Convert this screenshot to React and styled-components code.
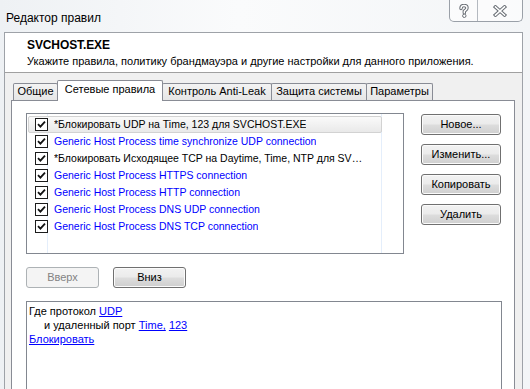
import React from "react";
import styled, { createGlobalStyle } from "styled-components";

const GlobalStyle = createGlobalStyle`
  html, body { margin: 0; padding: 0; background: #ffffff; }
  body { font-family: "Liberation Sans", Arial, sans-serif; }
  * { box-sizing: border-box; }
`;

const UI_FONT = `"Liberation Sans", Arial, sans-serif`;

const Window = styled.div`
  width: 530px;
  height: 389px;
  overflow: hidden;
  display: flex;
  flex-direction: column;
  background: linear-gradient(90deg, #eef1f4 0%, #fafbfc 45%, #f3f5f7 100%);
  font-family: ${UI_FONT};
  color: #000;
`;

const TitleBar = styled.div`
  height: 32px;
  flex: none;
  display: flex;
  align-items: flex-start;
  padding-left: 6px;
  padding-right: 7px;
`;

const Title = styled.div`
  font-size: 12px;
  line-height: 14px;
  margin-top: 11px;
  color: #000;
  flex: 1;
`;

const Caption = styled.div`
  display: flex;
  height: 22px;
  border: 1px solid #9aa0a8;
  border-top: none;
  border-radius: 0 0 5px 5px;
  background: rgba(255, 255, 255, 0.6);
  overflow: hidden;
`;

const CapBtn = styled.div`
  width: ${(p) => p.$w}px;
  height: 100%;
  display: flex;
  align-items: center;
  justify-content: center;
  border-left: ${(p) => (p.$first ? "none" : "1px solid #b4b9c0")};
`;

const Body = styled.div`
  flex: 1;
  display: flex;
  flex-direction: column;
  margin-left: 4px;
  margin-right: 7px;
  border: 1px solid #9ea2a8;
  border-bottom: none;
  background: #f0f0f0;
  min-height: 0;
`;

const Header = styled.div`
  height: 40px;
  flex: none;
  background: #ffffff;
  border-bottom: 1px solid #a0a0a0;
  padding: 5px 0 0 22px;
`;

const AppName = styled.div`
  font-size: 12px;
  font-weight: bold;
  line-height: 14px;
  letter-spacing: -0.1px;
`;

const AppHint = styled.div`
  font-size: 11px;
  line-height: 14px;
  margin-top: 2px;
`;

const Content = styled.div`
  flex: 1;
  display: flex;
  flex-direction: column;
  padding: 7px 7px 0 6px;
  min-height: 0;
`;

const Tabs = styled.div`
  display: flex;
  align-items: flex-end;
  height: 20px;
  padding-left: 2px;
  position: relative;
  z-index: 1;
`;

const Tab = styled.div`
  height: ${(p) => (p.$active ? 21 : 17)}px;
  margin-bottom: ${(p) => (p.$active ? -1 : 0)}px;
  width: ${(p) => p.$w}px;
  margin-left: -1px;
  border: 1px solid #898c95;
  border-bottom: none;
  border-radius: 2px 2px 0 0;
  background: ${(p) =>
    p.$active ? "#ffffff" : "linear-gradient(#f3f3f3, #e6e6e6)"};
  font-size: 11px;
  line-height: ${(p) => (p.$active ? 17 : 15)}px;
  text-align: center;
  white-space: nowrap;
  position: relative;
  z-index: ${(p) => (p.$active ? 2 : 1)};
  &:first-child { margin-left: 0; }
`;

const Pane = styled.div`
  flex: 1;
  background: #ffffff;
  border: 1px solid #898c95;
  border-bottom: none;
  padding: 12px 0 0 14px;
  display: flex;
  flex-direction: column;
  min-height: 0;
`;

const TopRow = styled.div`
  display: flex;
  gap: 17px;
`;

const RuleList = styled.div`
  width: 378px;
  height: 141px;
  border: 1px solid #828790;
  padding: 2px 1px;
  background:
    linear-gradient(#e4eefb, #e4eefb) 20px 0 / 1px 100% no-repeat,
    linear-gradient(#e4eefb, #e4eefb) 354px 0 / 1px 100% no-repeat,
    #ffffff;
`;

const RuleRow = styled.div`
  width: 354px;
  height: 17px;
  display: flex;
  align-items: center;
  padding-left: 6px;
  padding-right: 13px;
  border: 1px solid ${(p) => (p.$selected ? "#d2d2d2" : "transparent")};
  border-radius: 2px;
  background: ${(p) =>
    p.$selected ? "linear-gradient(#fafafa, #e9e9e9)" : "transparent"};
`;

const Check = styled.span`
  width: 13px;
  height: 13px;
  flex: none;
  border: 1px solid #1c1c1c;
  background: #ffffff;
  display: flex;
  align-items: center;
  justify-content: center;
`;

const RuleText = styled.span`
  margin-left: 6px;
  font-size: 10.5px;
  line-height: 15px;
  white-space: nowrap;
  overflow: hidden;
  text-overflow: ellipsis;
  color: ${(p) => (p.$blue ? "#0000ff" : "#000000")};
`;

const SideButtons = styled.div`
  display: flex;
  flex-direction: column;
  gap: 9px;
  padding-top: 1px;
`;

const Button = styled.div`
  width: ${(p) => p.$w || 80}px;
  height: 21px;
  border: 1px solid ${(p) => (p.$disabled ? "#adb2b5" : "#707070")};
  border-radius: 3px;
  background: ${(p) =>
    p.$disabled
      ? "#f4f4f4"
      : "linear-gradient(#f2f2f2 0%, #ebebeb 48%, #dddddd 52%, #cfcfcf 100%)"};
  box-shadow: ${(p) => (p.$disabled ? "none" : "inset 0 0 0 1px #fbfbfb")};
  color: ${(p) => (p.$disabled ? "#838383" : "#000000")};
  font-size: 11px;
  line-height: 19px;
  text-align: center;
  white-space: nowrap;
`;

const MoveRow = styled.div`
  display: flex;
  gap: 14px;
  margin-top: 13px;
`;

const Desc = styled.div`
  flex: 1;
  width: 476px;
  margin-top: 13px;
  border: 1px solid #828790;
  border-bottom: none;
  padding: 2px 2px;
  font-size: 11px;
  line-height: 14px;
`;

const DescLine = styled.div`
  padding-left: ${(p) => p.$indent || 0}px;
  white-space: nowrap;
`;

const Link = styled.span`
  color: #0000ff;
  text-decoration: underline;
`;

const CheckMark = () => (
  <svg width="9" height="9" viewBox="0 0 9 9">
    <path d="M1 4.2 L3.4 6.6 L8 1.6" fill="none" stroke="#111" strokeWidth="1.8" />
  </svg>
);

const HelpGlyph = () => (
  <svg width="12" height="14" viewBox="0 0 12 14">
    <path
      d="M3 4.5 C3 2.2 4.5 1.5 6 1.5 C7.8 1.5 9 2.5 9 4 C9 5.6 7.2 6.2 6.3 7.2 L6.3 9"
      fill="none"
      stroke="#6a6f76"
      strokeWidth="3.4"
      strokeLinecap="round"
    />
    <path
      d="M3 4.5 C3 2.2 4.5 1.5 6 1.5 C7.8 1.5 9 2.5 9 4 C9 5.6 7.2 6.2 6.3 7.2 L6.3 9"
      fill="none"
      stroke="#ffffff"
      strokeWidth="1.4"
      strokeLinecap="round"
    />
    <circle cx="6.3" cy="11.8" r="1.7" fill="#ffffff" stroke="#6a6f76" strokeWidth="1" />
  </svg>
);

const CloseGlyph = () => (
  <svg width="14" height="12" viewBox="0 0 14 12">
    <path d="M2.5 2 L11.5 10 M11.5 2 L2.5 10" stroke="#6a6f76" strokeWidth="3.6" strokeLinecap="square" />
    <path d="M2.5 2 L11.5 10 M11.5 2 L2.5 10" stroke="#ffffff" strokeWidth="1.6" strokeLinecap="square" />
  </svg>
);

const rules = [
  { text: "*Блокировать UDP на Time, 123 для SVCHOST.EXE", blue: false, selected: true },
  { text: "Generic Host Process time synchronize UDP connection", blue: true },
  { text: "*Блокировать Исходящее TCP на Daytime, Time, NTP для SVCHOST.EXE", blue: false },
  { text: "Generic Host Process HTTPS connection", blue: true },
  { text: "Generic Host Process HTTP connection", blue: true },
  { text: "Generic Host Process DNS UDP connection", blue: true },
  { text: "Generic Host Process DNS TCP connection", blue: true },
];

const tabs = [
  { label: "Общие", w: 45 },
  { label: "Сетевые правила", w: 106, active: true },
  { label: "Контроль Anti-Leak", w: 110 },
  { label: "Защита системы", w: 96 },
  { label: "Параметры", w: 67 },
];

export default function App() {
  return (
    <>
      <GlobalStyle />
      <Window>
        <TitleBar>
          <Title>Редактор правил</Title>
          <Caption>
            <CapBtn $w={27} $first>
              <HelpGlyph />
            </CapBtn>
            <CapBtn $w={45}>
              <CloseGlyph />
            </CapBtn>
          </Caption>
        </TitleBar>
        <Body>
          <Header>
            <AppName>SVCHOST.EXE</AppName>
            <AppHint>
              Укажите правила, политику брандмауэра и другие настройки для данного приложения.
            </AppHint>
          </Header>
          <Content>
            <Tabs>
              {tabs.map((t) => (
                <Tab key={t.label} $w={t.w} $active={t.active}>
                  {t.label}
                </Tab>
              ))}
            </Tabs>
            <Pane>
              <TopRow>
                <RuleList>
                  {rules.map((r) => (
                    <RuleRow key={r.text} $selected={r.selected}>
                      <Check>
                        <CheckMark />
                      </Check>
                      <RuleText $blue={r.blue}>{r.text}</RuleText>
                    </RuleRow>
                  ))}
                </RuleList>
                <SideButtons>
                  <Button>Новое...</Button>
                  <Button>Изменить...</Button>
                  <Button>Копировать</Button>
                  <Button>Удалить</Button>
                </SideButtons>
              </TopRow>
              <MoveRow>
                <Button $w={73} $disabled>
                  Вверх
                </Button>
                <Button $w={73}>Вниз</Button>
              </MoveRow>
              <Desc>
                <DescLine>
                  Где протокол <Link>UDP</Link>
                </DescLine>
                <DescLine $indent={15}>
                  и удаленный порт <Link>Time,</Link> <Link>123</Link>
                </DescLine>
                <DescLine>
                  <Link>Блокировать</Link>
                </DescLine>
              </Desc>
            </Pane>
          </Content>
        </Body>
      </Window>
    </>
  );
}
